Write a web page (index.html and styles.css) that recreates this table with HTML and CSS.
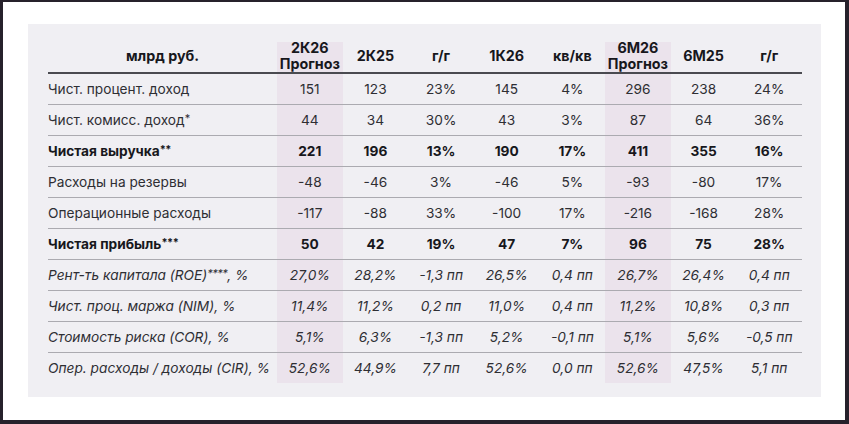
FILE: index.html
```html
<!DOCTYPE html>
<html lang="ru">
<head>
<meta charset="utf-8">
<link rel="stylesheet" href="styles.css">
</head>
<body>
<div class="frame">
  <div class="screen">
    <div class="panel">
      <table class="fin">
        <colgroup>
          <col class="c-label">
          <col><col><col><col><col><col><col><col>
        </colgroup>
        <thead>
          <tr>
            <th class="label-head">млрд руб.</th>
            <th class="hl">2К26<br>Прогноз</th>
            <th>2К25</th>
            <th>г/г</th>
            <th>1К26</th>
            <th>кв/кв</th>
            <th class="hl">6М26<br>Прогноз</th>
            <th>6М25</th>
            <th>г/г</th>
          </tr>
        </thead>
        <tbody>
          <tr>
            <td class="label">Чист. процент. доход</td>
            <td class="hl">151</td><td>123</td><td>23%</td><td>145</td><td>4%</td><td class="hl">296</td><td>238</td><td>24%</td>
          </tr>
          <tr>
            <td class="label">Чист. комисс. доход<span class="ast">*</span></td>
            <td class="hl">44</td><td>34</td><td>30%</td><td>43</td><td>3%</td><td class="hl">87</td><td>64</td><td>36%</td>
          </tr>
          <tr class="bold">
            <td class="label">Чистая выручка<span class="ast">**</span></td>
            <td class="hl">221</td><td>196</td><td>13%</td><td>190</td><td>17%</td><td class="hl">411</td><td>355</td><td>16%</td>
          </tr>
          <tr>
            <td class="label">Расходы на резервы</td>
            <td class="hl">-48</td><td>-46</td><td>3%</td><td>-46</td><td>5%</td><td class="hl">-93</td><td>-80</td><td>17%</td>
          </tr>
          <tr>
            <td class="label">Операционные расходы</td>
            <td class="hl">-117</td><td>-88</td><td>33%</td><td>-100</td><td>17%</td><td class="hl">-216</td><td>-168</td><td>28%</td>
          </tr>
          <tr class="bold">
            <td class="label">Чистая прибыль<span class="ast">***</span></td>
            <td class="hl">50</td><td>42</td><td>19%</td><td>47</td><td>7%</td><td class="hl">96</td><td>75</td><td>28%</td>
          </tr>
          <tr class="ital">
            <td class="label">Рент-ть капитала (ROE)<span class="ast">****</span>, %</td>
            <td class="hl">27,0%</td><td>28,2%</td><td>-1,3 пп</td><td>26,5%</td><td>0,4 пп</td><td class="hl">26,7%</td><td>26,4%</td><td>0,4 пп</td>
          </tr>
          <tr class="ital">
            <td class="label">Чист. проц. маржа (NIM), %</td>
            <td class="hl">11,4%</td><td>11,2%</td><td>0,2 пп</td><td>11,0%</td><td>0,4 пп</td><td class="hl">11,2%</td><td>10,8%</td><td>0,3 пп</td>
          </tr>
          <tr class="ital">
            <td class="label">Стоимость риска (COR), %</td>
            <td class="hl">5,1%</td><td>6,3%</td><td>-1,3 пп</td><td>5,2%</td><td>-0,1 пп</td><td class="hl">5,1%</td><td>5,6%</td><td>-0,5 пп</td>
          </tr>
          <tr class="ital last">
            <td class="label">Опер. расходы / доходы (CIR), %</td>
            <td class="hl">52,6%</td><td>44,9%</td><td>7,7 пп</td><td>52,6%</td><td>0,0 пп</td><td class="hl">52,6%</td><td>47,5%</td><td>5,1 пп</td>
          </tr>
        </tbody>
      </table>
    </div>
  </div>
</div>
</body>
</html>
```

FILE: styles.css
```css
html, body {
  margin: 0;
  padding: 0;
}
body {
  width: 849px;
  height: 424px;
  overflow: hidden;
  background: #26212b;
  font-family: "Inter", "DejaVu Sans", sans-serif;
}
.frame {
  box-sizing: border-box;
  width: 849px;
  height: 424px;
  padding: 2px 4px 4px 3px;
  display: flex;
}
.screen {
  flex: 1;
  background: #ffffff;
  padding: 22px 24px 23px 25px;
  display: flex;
}
.panel {
  flex: 1;
  background: #f0eff3;
  padding: 16px 19px 14px 20px;
}
.fin {
  width: 754px;
  table-layout: fixed;
  border-collapse: collapse;
  color: #2e2e33;
  font-size: 13.7px;
  line-height: 16px;
}
.c-label {
  width: 229px;
}
.fin th {
  height: 32px;
  padding: 0;
  font-weight: 700;
  font-size: 14.3px;
  line-height: 16px;
  color: #17171c;
  text-align: center;
  vertical-align: middle;
  border-bottom: 2px solid #4a4a50;
}
.fin td {
  height: 30px;
  padding: 0;
  text-align: center;
  vertical-align: middle;
  border-bottom: 1px solid #abaab0;
  white-space: nowrap;
}
.fin td.label {
  text-align: left;
}
.fin .ast {
  font-size: 0.8em;
  position: relative;
  top: -0.2em;
  letter-spacing: -0.5px;
}
.fin tr.last td {
  border-bottom: none;
}
.fin td.hl {
  background: #ebe3ec;
}
.fin th.hl {
  background: linear-gradient(transparent 2px, #ebe3ec 2px);
}
.fin tr.bold td {
  font-weight: 700;
  color: #17171c;
}
.fin tr.ital td {
  font-style: italic;
}
```
